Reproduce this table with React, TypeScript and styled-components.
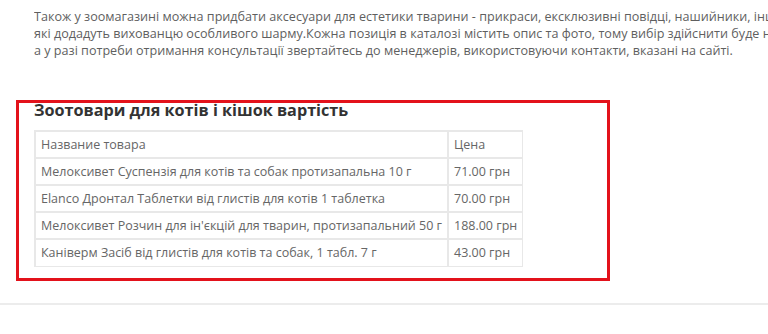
import React from 'react';
import styled, { createGlobalStyle } from 'styled-components';

const GlobalStyle = createGlobalStyle`
  html, body {
    margin: 0;
    padding: 0;
    background: #fff;
  }
  body {
    font-family: "Open Sans", "Liberation Sans", Arial, sans-serif;
    overflow: hidden;
  }
`;

const Page = styled.div`
  width: 768px;
  height: 334px;
  overflow: hidden;
`;

const Content = styled.div`
  padding: 8px 0 0 34px;
`;

const Intro = styled.div`
  font-size: 12.6px;
  line-height: 17px;
  color: #5f5f5f;
  white-space: nowrap;
  overflow: hidden;
`;

const IntroLine = styled.div`
  display: block;
`;

const Highlight = styled.section`
  box-sizing: border-box;
  margin: 41px 0 0 -18px;
  width: 594px;
  border: 3px solid #e3121b;
  padding: 0 0 11px 15px;
`;

const Heading = styled.h3`
  margin: 0;
  font-size: 16.2px;
  line-height: 12px;
  padding-top: 1px;
  font-weight: 700;
  color: #333;
`;

const PriceTable = styled.table`
  border-collapse: collapse;
  table-layout: fixed;
  width: 487px;
  margin-top: 14px;
  font-size: 12.5px;
  color: #666;
`;

const Cell = styled.td<{ $price?: boolean }>`
  border: 1px solid #e8e8e8;
  border-width: 2px 1px 1px 2px;
  height: 27px;
  box-sizing: border-box;
  padding: 0 4px 0 5px;
  white-space: nowrap;
  width: ${p => (p.$price ? '74px' : '413px')};
`;

const Divider = styled.div`
  margin-top: 22px;
  height: 2px;
  background: #ececec;
`;

const rows: [string, string][] = [
  ['Мелоксивет Суспензія для котів та собак протизапальна 10 г', '71.00 грн'],
  ['Elanco Дронтал Таблетки від глистів для котів 1 таблетка', '70.00 грн'],
  ['Мелоксивет Розчин для ін\'єкцій для тварин, протизапальний 50 г', '188.00 грн'],
  ['Каніверм Засіб від глистів для котів та собак, 1 табл. 7 г', '43.00 грн'],
];

const App: React.FC = () => {
  return (
    <Page>
      <GlobalStyle />
      <Content>
        <Intro>
          <IntroLine>
            Також у зоомагазині можна придбати аксесуари для естетики тварини - прикраси, ексклюзивні повідці, нашийники, інші речі,
          </IntroLine>
          <IntroLine>
            які додадуть вихованцю особливого шарму.Кожна позиція в каталозі містить опис та фото, тому вибір здійснити буде нескладно,
          </IntroLine>
          <IntroLine>
            а у разі потреби отримання консультації звертайтесь до менеджерів, використовуючи контакти, вказані на сайті.
          </IntroLine>
        </Intro>

        <Highlight>
          <Heading>Зоотовари для котів і кішок вартість</Heading>
          <PriceTable>
            <tbody>
              <tr>
                <Cell>Название товара</Cell>
                <Cell $price>Цена</Cell>
              </tr>
              {rows.map(([name, price]) => (
                <tr key={name}>
                  <Cell>{name}</Cell>
                  <Cell $price>{price}</Cell>
                </tr>
              ))}
            </tbody>
          </PriceTable>
        </Highlight>
      </Content>
      <Divider />
    </Page>
  );
};

export default App;
